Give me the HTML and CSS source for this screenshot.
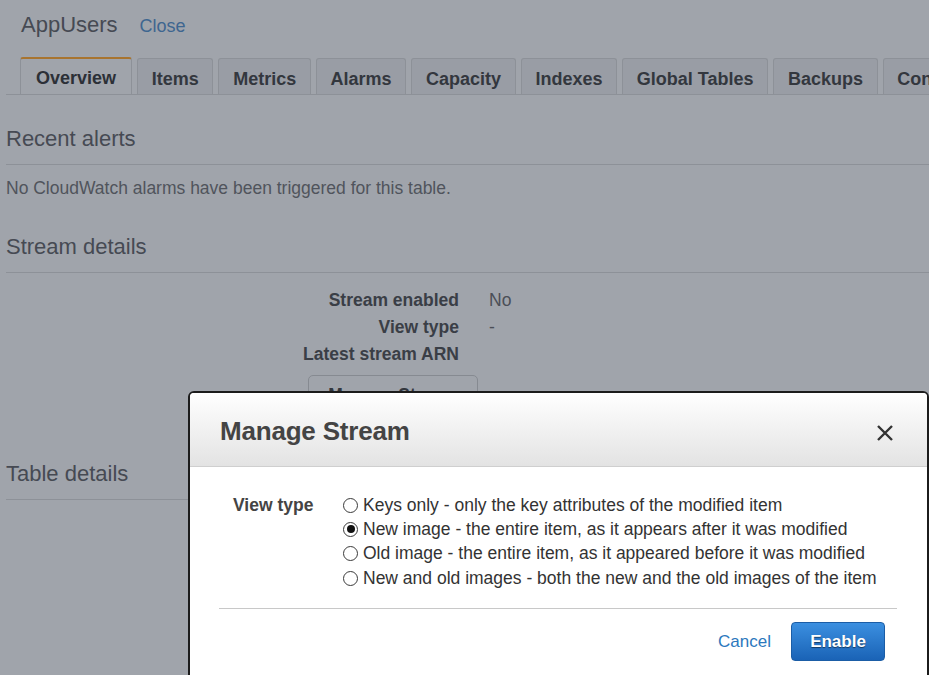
FILE: index.html
```html
<!DOCTYPE html>
<html lang="en">
<head>
<meta charset="utf-8">
<title>AppUsers - Manage Stream</title>
<link rel="stylesheet" href="styles.css">
</head>
<body>
<div class="page">
  <div class="title-row">
    <span class="table-name">AppUsers</span>
    <a class="close-link">Close</a>
  </div>
  <div class="tabs">
    <div class="tab active">Overview</div>
    <div class="tab">Items</div>
    <div class="tab">Metrics</div>
    <div class="tab">Alarms</div>
    <div class="tab">Capacity</div>
    <div class="tab">Indexes</div>
    <div class="tab">Global Tables</div>
    <div class="tab">Backups</div>
    <div class="tab">Contributor Insights</div>
  </div>

  <section class="section">
    <h2 class="section-title">Recent alerts</h2>
    <p class="muted">No CloudWatch alarms have been triggered for this table.</p>
  </section>

  <section class="section">
    <h2 class="section-title">Stream details</h2>
    <div class="kv">
      <div class="k">Stream enabled</div><div class="v">No</div>
      <div class="k">View type</div><div class="v">-</div>
      <div class="k">Latest stream ARN</div><div class="v"></div>
    </div>
    <button class="ghost-btn">Manage Stream</button>
  </section>

  <section class="section table-details">
    <h2 class="section-title">Table details</h2>
  </section>
</div>

<div class="modal">
  <div class="modal-header">
    <h1 class="modal-title">Manage Stream</h1>
    <svg class="modal-x" width="18" height="18" viewBox="0 0 18 18" aria-label="Close">
      <path d="M2 2 L16 16 M16 2 L2 16" stroke="#333" stroke-width="2.4" fill="none"/>
    </svg>
  </div>
  <div class="modal-body">
    <div class="field-label">View type</div>
    <div class="options">
      <label class="option"><span class="radio"></span>Keys only - only the key attributes of the modified item</label>
      <label class="option"><span class="radio checked"></span>New image - the entire item, as it appears after it was modified</label>
      <label class="option"><span class="radio"></span>Old image - the entire item, as it appeared before it was modified</label>
      <label class="option"><span class="radio"></span>New and old images - both the new and the old images of the item</label>
    </div>
  </div>
  <div class="modal-footer">
    <a class="cancel">Cancel</a>
    <button class="primary">Enable</button>
  </div>
</div>
</body>
</html>
```

FILE: styles.css
```css
html, body {
  margin: 0;
  padding: 0;
  overflow: hidden;
  width: 929px;
  height: 675px;
}

body {
  background: #a0a4ab;
  font-family: "Liberation Sans", Arial, sans-serif;
  color: #3a3e46;
  position: relative;
}

.page {
  padding-left: 6px;
}

.title-row {
  padding: 12px 0 0 15px;
  height: 26px;
  display: flex;
  align-items: center;
  gap: 22px;
  white-space: nowrap;
}

.table-name {
  font-size: 22px;
  color: #464a53;
  line-height: 26px;
}

.close-link {
  font-size: 18px;
  color: #3e6690;
  line-height: 26px;
  margin-top: 2px;
}

.tabs {
  margin-top: 19px;
  padding-left: 14px;
  display: flex;
  gap: 5px;
  border-bottom: 1px solid #8d9198;
  height: 37px;
  white-space: nowrap;
  overflow: hidden;
}

.tab {
  flex: none;
  box-sizing: border-box;
  height: 37px;
  padding: 4px 13.7px 0;
  line-height: 32px;
  font-size: 18px;
  font-weight: bold;
  color: #33373e;
  background: #999da5;
  border: 1px solid #8d9198;
  border-bottom: none;
  border-radius: 3px 3px 0 0;
  margin-top: 1px;
}

.tab.active {
  margin-top: 0;
  height: 39px;
  padding: 3px 15px 0;
  background: #a0a4ab;
  border-top: 2px solid #a8742f;
  color: #2c3037;
}

.section {
  padding-top: 32px;
}

.section-title {
  margin: 0;
  font-size: 22px;
  font-weight: normal;
  line-height: 24px;
  color: #464a53;
  padding-bottom: 13px;
  border-bottom: 1px solid #8d9198;
}

.muted {
  margin: 13px 0 0;
  font-size: 17.5px;
  line-height: 21px;
  color: #50545c;
}

.section + .section {
  padding-top: 36px;
}

.kv {
  margin-top: 14px;
  display: grid;
  grid-template-columns: 453px 1fr;
  column-gap: 30px;
  grid-auto-rows: 27px;
  align-items: center;
  font-size: 17.5px;
}

.k {
  text-align: right;
  font-weight: bold;
  color: #3a3e46;
}

.v {
  color: #4b4f57;
}

.ghost-btn {
  display: block;
  margin: 7px 0 0 302px;
  width: 170px;
  height: 40px;
  background: #a0a4ab;
  border: 1px solid #868a91;
  border-radius: 5px;
  font-family: inherit;
  font-size: 17.5px;
  font-weight: bold;
  color: #33373e;
}

.section.table-details {
  padding-top: 47px;
}

/* Modal dialog (overlays the page) */
.modal {
  position: absolute;
  left: 188px;
  top: 391px;
  width: 741px;
  height: 320px;
  box-sizing: border-box;
  background: #ffffff;
  border: 2px solid #1c1c1c;
  border-radius: 6px;
  overflow: hidden;
}

.modal-header {
  height: 74px;
  box-sizing: border-box;
  border-bottom: 1px solid #cfcfcf;
  background: linear-gradient(#ffffff, #e3e3e3);
  display: flex;
  align-items: center;
  justify-content: space-between;
  padding: 4px 33px 0 30px;
}

.modal-title {
  margin: 0;
  font-size: 26px;
  font-weight: bold;
  color: #444;
  letter-spacing: -0.2px;
}

.modal-x {
  display: block;
  margin-top: 2px;
}

.modal-body {
  display: flex;
  padding: 26px 0 0 43px;
}

.field-label {
  width: 110px;
  flex: none;
  font-size: 17.5px;
  font-weight: bold;
  line-height: 24px;
  color: #444;
}

.options {
  display: flex;
  flex-direction: column;
}

.option {
  display: flex;
  align-items: center;
  height: 24.3px;
  font-size: 17.5px;
  color: #333;
  white-space: nowrap;
}

.radio {
  width: 15px;
  height: 15px;
  box-sizing: border-box;
  border: 1.3px solid #3a3a3a;
  border-radius: 50%;
  margin-right: 5px;
  display: flex;
  align-items: center;
  justify-content: center;
  flex: none;
}

.radio.checked::after {
  content: "";
  width: 8px;
  height: 8px;
  border-radius: 50%;
  background: #111;
}

.modal-footer {
  margin: 18px 30px 0 29px;
  border-top: 1px solid #c8c8c8;
  padding: 13px 12px 0 0;
  display: flex;
  justify-content: flex-end;
  align-items: center;
  gap: 20px;
}

.cancel {
  font-size: 17px;
  color: #2c78bd;
}

.primary {
  width: 94px;
  height: 39px;
  border: 1px solid #1b5da6;
  border-radius: 4px;
  background: linear-gradient(#3b8fe0, #1a63b6);
  color: #fff;
  font-family: inherit;
  font-size: 17px;
  font-weight: bold;
  text-shadow: 0 1px 1px rgba(0, 0, 0, 0.5);
}
```
